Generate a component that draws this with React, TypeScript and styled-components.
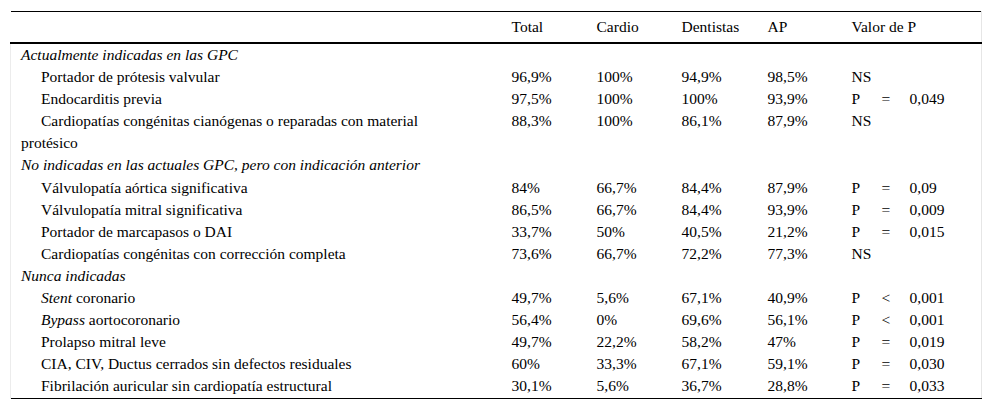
import React from 'react';
import styled, { createGlobalStyle } from 'styled-components';

const GlobalStyle = createGlobalStyle`
  body {
    margin: 0;
    background: #fff;
    font-family: "Liberation Serif", "Times New Roman", serif;
    color: #000;
  }
`;

const Wrapper = styled.div`
  padding: 11px 11px 0 10px;
`;

const Table = styled.table`
  width: 971px;
  table-layout: fixed;
  border-collapse: collapse;
  font-family: "Liberation Serif", "Times New Roman", serif;
  font-size: 15.5px;
  color: #000;
  border-top: 1px solid #000;
  border-bottom: 1px solid #000;
  border-right: 1px solid #e6e6e6;
`;

const HeadRow = styled.tr`
  border-bottom: 2px solid #000;
`;

const HeadCell = styled.th`
  height: 30px;
  padding: 0 10px;
  font-weight: normal;
  text-align: left;
  vertical-align: middle;
`;

const Cell = styled.td`
  padding: 0 10px;
  line-height: 22.1px;
  text-align: left;
  vertical-align: top;
  white-space: nowrap;
`;

const LabelCell = styled.td<{ $indent?: boolean }>`
  padding: 0 30px 0 10px;
  line-height: 22.1px;
  vertical-align: top;
  border-left: 1px solid #ececec;
  text-indent: ${(p) => (p.$indent ? '20px' : '0')};
`;

const SectionCell = styled.td`
  padding: 0 10px;
  line-height: 22.1px;
  font-style: italic;
  white-space: nowrap;
  border-left: 1px solid #ececec;
`;

type Row = {
  label: React.ReactNode;
  values: [string, string, string, string];
  p: string;
  op?: string;
  val?: string;
};

type Section = { title: string; rows: Row[] };

const sections: Section[] = [
  {
    title: 'Actualmente indicadas en las GPC',
    rows: [
      { label: 'Portador de prótesis valvular', values: ['96,9%', '100%', '94,9%', '98,5%'], p: 'NS' },
      { label: 'Endocarditis previa', values: ['97,5%', '100%', '100%', '93,9%'], p: 'P', op: '=', val: '0,049' },
      {
        label: 'Cardiopatías congénitas cianógenas o reparadas con material protésico',
        values: ['88,3%', '100%', '86,1%', '87,9%'],
        p: 'NS',
      },
    ],
  },
  {
    title: 'No indicadas en las actuales GPC, pero con indicación anterior',
    rows: [
      { label: 'Válvulopatía aórtica significativa', values: ['84%', '66,7%', '84,4%', '87,9%'], p: 'P', op: '=', val: '0,09' },
      { label: 'Válvulopatía mitral significativa', values: ['86,5%', '66,7%', '84,4%', '93,9%'], p: 'P', op: '=', val: '0,009' },
      { label: 'Portador de marcapasos o DAI', values: ['33,7%', '50%', '40,5%', '21,2%'], p: 'P', op: '=', val: '0,015' },
      { label: 'Cardiopatías congénitas con corrección completa', values: ['73,6%', '66,7%', '72,2%', '77,3%'], p: 'NS' },
    ],
  },
  {
    title: 'Nunca indicadas',
    rows: [
      { label: <><i>Stent</i> coronario</>, values: ['49,7%', '5,6%', '67,1%', '40,9%'], p: 'P', op: '<', val: '0,001' },
      { label: <><i>Bypass</i> aortocoronario</>, values: ['56,4%', '0%', '69,6%', '56,1%'], p: 'P', op: '<', val: '0,001' },
      { label: 'Prolapso mitral leve', values: ['49,7%', '22,2%', '58,2%', '47%'], p: 'P', op: '=', val: '0,019' },
      { label: 'CIA, CIV, Ductus cerrados sin defectos residuales', values: ['60%', '33,3%', '67,1%', '59,1%'], p: 'P', op: '=', val: '0,030' },
      { label: 'Fibrilación auricular sin cardiopatía estructural', values: ['30,1%', '5,6%', '36,7%', '28,8%'], p: 'P', op: '=', val: '0,033' },
    ],
  },
];

const App: React.FC = () => {
  return (
    <Wrapper>
      <GlobalStyle />
      <Table>
        <colgroup>
          <col style={{ width: 491 }} />
          <col style={{ width: 85 }} />
          <col style={{ width: 85 }} />
          <col style={{ width: 86 }} />
          <col style={{ width: 84 }} />
          <col style={{ width: 30 }} />
          <col style={{ width: 28 }} />
          <col style={{ width: 82 }} />
        </colgroup>
        <thead>
          <HeadRow>
            <HeadCell />
            <HeadCell>Total</HeadCell>
            <HeadCell>Cardio</HeadCell>
            <HeadCell>Dentistas</HeadCell>
            <HeadCell>AP</HeadCell>
            <HeadCell colSpan={3}>Valor de P</HeadCell>
          </HeadRow>
        </thead>
        <tbody>
          {sections.map((s) => (
            <React.Fragment key={s.title}>
              <tr>
                <SectionCell colSpan={8}>{s.title}</SectionCell>
              </tr>
              {s.rows.map((r, i) => (
                <tr key={i}>
                  <LabelCell $indent>{r.label}</LabelCell>
                  {r.values.map((v, j) => (
                    <Cell key={j}>{v}</Cell>
                  ))}
                  {r.op ? (
                    <>
                      <Cell>{r.p}</Cell>
                      <Cell>{r.op}</Cell>
                      <Cell>{r.val}</Cell>
                    </>
                  ) : (
                    <Cell colSpan={3}>{r.p}</Cell>
                  )}
                </tr>
              ))}
            </React.Fragment>
          ))}
        </tbody>
      </Table>
    </Wrapper>
  );
};

export default App;
